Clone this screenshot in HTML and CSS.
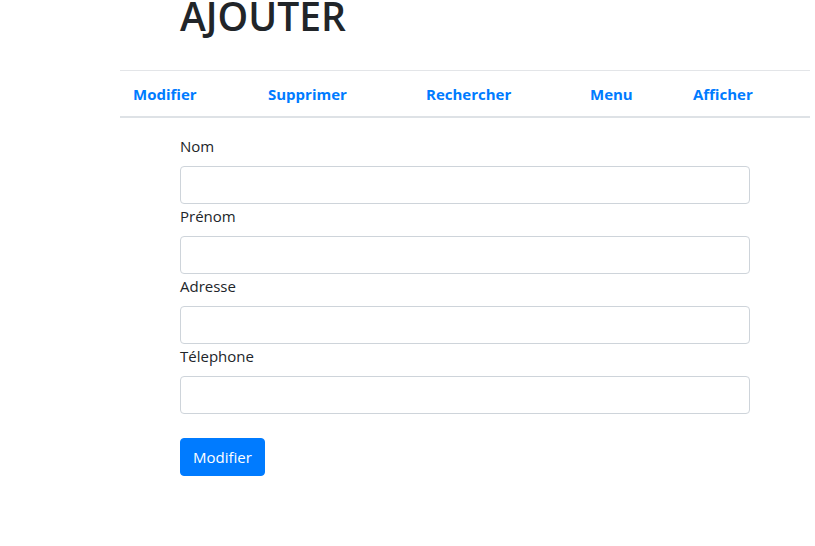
FILE: index.html
```html
<!DOCTYPE html>
<html lang="fr">
<head>
<meta charset="utf-8">
<title>Ajouter</title>
<link rel="stylesheet" href="styles.css">
</head>
<body>
<div class="page">
  <h1 class="title">AJOUTER</h1>
  <nav class="nav">
    <a class="nav-link" href="#">Modifier</a>
    <a class="nav-link" href="#">Supprimer</a>
    <a class="nav-link" href="#">Rechercher</a>
    <a class="nav-link" href="#">Menu</a>
    <a class="nav-link" href="#">Afficher</a>
  </nav>
  <form class="form">
    <label class="label">Nom</label>
    <input class="input" type="text">
    <label class="label">Prénom</label>
    <input class="input" type="text">
    <label class="label">Adresse</label>
    <input class="input" type="text">
    <label class="label">Télephone</label>
    <input class="input" type="text">
    <button class="btn" type="button">Modifier</button>
  </form>
</div>
</body>
</html>
```
FILE: styles.css
```css
* { box-sizing: border-box; }
html, body { margin: 0; padding: 0; background: #fff; }
body {
  font-family: "Open Sans", "Noto Sans", sans-serif;
  font-size: 15px;
  line-height: 1.5;
  color: #212529;
  overflow: hidden;
}
.page {
  width: 690px;
  margin-left: 120px;
}
.title {
  margin: -8px 0 0 60px;
  font-size: 39px;
  font-weight: 600;
  line-height: 48px;
  height: 48px;
  color: #212529;
}
.nav {
  margin-top: 30px;
  border-top: 1px solid #e3e5e8;
  border-bottom: 2px solid #dee2e6;
  display: grid;
  grid-template-columns: 135px 158px 164px 103px 1fr;
  padding-left: 13px;
  height: 48px;
  align-items: center;
}
.nav-link {
  color: #007bff;
  font-weight: 700;
  text-decoration: none;
  font-size: 15px;
  line-height: 22px;
  padding-top: 1px;
}
.form {
  margin-left: 60px;
  width: 570px;
  padding-top: 16px;
  display: flex;
  flex-direction: column;
}
.label {
  display: block;
  line-height: 24px;
  margin-bottom: 8px;
}
.input {
  display: block;
  width: 100%;
  height: 38px;
  border: 1px solid #ced4da;
  border-radius: 4px;
  padding: 6px 12px;
  font: inherit;
}
.btn {
  align-self: flex-start;
  margin-top: 24px;
  height: 38px;
  padding: 0 12px;
  background: #007bff;
  color: #fff;
  border: 1px solid #007bff;
  border-radius: 4px;
  font: inherit;
  line-height: 36px;
}
```
